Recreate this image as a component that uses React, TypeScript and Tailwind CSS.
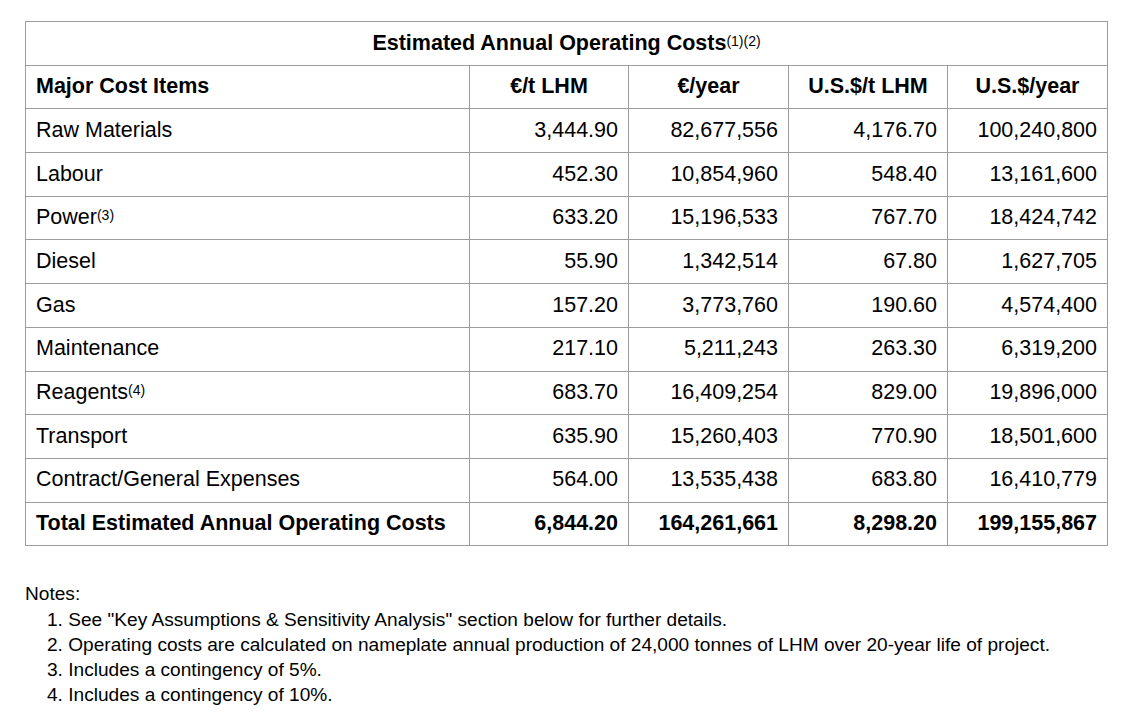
import React from 'react'

const rows: [string, string, string, string, string, string?][] = [
  ['Raw Materials', '3,444.90', '82,677,556', '4,176.70', '100,240,800'],
  ['Labour', '452.30', '10,854,960', '548.40', '13,161,600'],
  ['Power', '633.20', '15,196,533', '767.70', '18,424,742', '(3)'],
  ['Diesel', '55.90', '1,342,514', '67.80', '1,627,705'],
  ['Gas', '157.20', '3,773,760', '190.60', '4,574,400'],
  ['Maintenance', '217.10', '5,211,243', '263.30', '6,319,200'],
  ['Reagents', '683.70', '16,409,254', '829.00', '19,896,000', '(4)'],
  ['Transport', '635.90', '15,260,403', '770.90', '18,501,600'],
  ['Contract/General Expenses', '564.00', '13,535,438', '683.80', '16,410,779'],
]

const notes = [
  '1. See "Key Assumptions & Sensitivity Analysis" section below for further details.',
  '2. Operating costs are calculated on nameplate annual production of 24,000 tonnes of LHM over 20-year life of project.',
  '3. Includes a contingency of 5%.',
  '4. Includes a contingency of 10%.',
]

const cell = 'border border-[#9c9c9c] h-[43.7px] px-[10px] align-middle'

export default function App() {
  return (
    <div className="min-h-[720px] bg-white pl-[25px] pt-[21px] font-['Liberation_Sans',Arial,sans-serif] text-black">
      <table className="table-fixed border-collapse text-[21.5px] leading-none">
        <colgroup>
          <col className="w-[444px]" />
          <col className="w-[159px]" />
          <col className="w-[160px]" />
          <col className="w-[159px]" />
          <col className="w-[160px]" />
        </colgroup>
        <tbody>
          <tr>
            <td colSpan={5} className={`${cell} text-center font-bold`}>
              Estimated Annual Operating Costs
              <span className="align-[4px] text-[14px] font-normal">(1)(2)</span>
            </td>
          </tr>
          <tr className="font-bold">
            <td className={cell}>Major Cost Items</td>
            <td className={`${cell} text-center`}>€/t LHM</td>
            <td className={`${cell} text-center`}>€/year</td>
            <td className={`${cell} text-center`}>U.S.$/t LHM</td>
            <td className={`${cell} text-center`}>U.S.$/year</td>
          </tr>
          {rows.map(([name, a, b, c, d, sup]) => (
            <tr key={name}>
              <td className={cell}>
                {name}
                {sup && <span className="align-[4px] text-[14px]">{sup}</span>}
              </td>
              <td className={`${cell} text-right`}>{a}</td>
              <td className={`${cell} text-right`}>{b}</td>
              <td className={`${cell} text-right`}>{c}</td>
              <td className={`${cell} text-right`}>{d}</td>
            </tr>
          ))}
          <tr className="font-bold">
            <td className={cell}>Total Estimated Annual Operating Costs</td>
            <td className={`${cell} text-right`}>6,844.20</td>
            <td className={`${cell} text-right`}>164,261,661</td>
            <td className={`${cell} text-right`}>8,298.20</td>
            <td className={`${cell} text-right`}>199,155,867</td>
          </tr>
        </tbody>
      </table>

      <div className="mt-[35px] text-[19.1px] leading-[25.3px]">
        <p>Notes:</p>
        <div className="pl-[22px]">
          {notes.map(n => (
            <p key={n}>{n}</p>
          ))}
        </div>
      </div>
    </div>
  )
}
